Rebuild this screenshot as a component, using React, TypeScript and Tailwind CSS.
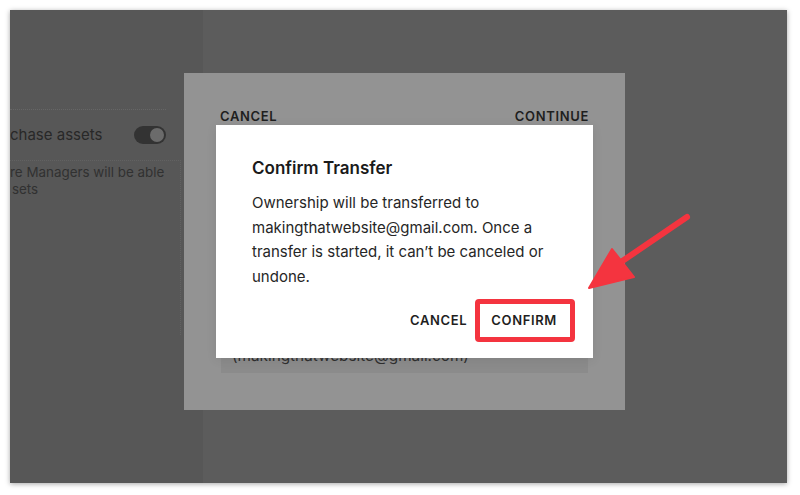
const App = () => {
  return (
    <div
      className="relative w-[800px] h-[495px] bg-white p-[10px] overflow-hidden"
      style={{ fontFamily: "Inter, 'Noto Sans', sans-serif" }}
    >
      {/* Window */}
      <div className="relative flex w-[777px] h-[473px] shadow-[0_1px_5px_rgba(0,0,0,0.35)]">
        {/* Left settings panel (dimmed) */}
        <div className="w-[193px] overflow-hidden bg-[#575757] pt-[99px]">
          <div className="w-[156px] border-t border-dotted border-[#666]">
            <div className="flex items-center justify-between h-[50px]">
              <span className="text-[15px] text-[#282828] whitespace-nowrap">chase assets</span>
              <div className="flex items-center justify-end w-[32px] h-[18px] rounded-full bg-[#333] pr-[2px]">
                <div className="w-[14px] h-[14px] rounded-full bg-[#6b6b6b]"></div>
              </div>
            </div>
          </div>
          <div className="w-[171px] h-[175px] border-t border-r border-dotted border-[#626262] pt-[3px]">
            <p className="text-[13.4px] leading-[17px] text-[#313131] whitespace-nowrap">re Managers will be able</p>
            <p className="text-[13.4px] leading-[17px] text-[#313131] pl-[2px]">sets</p>
          </div>
        </div>
        <div className="flex-1 bg-[#5c5c5c]"></div>

        {/* Transfer panel (dimmed) */}
        <div className="absolute left-[174px] top-[63px] w-[441px] h-[337px] bg-[#939393] flex flex-col">
          <div className="flex justify-between px-[36px] pt-[34px] text-[13px] font-semibold tracking-[0.05em] text-[#1f1f1f]">
            <span>CANCEL</span>
            <span>CONTINUE</span>
          </div>
          <div className="flex-1"></div>
          <div className="mx-[37px] mb-[37px] h-[38px] bg-[#8b8b8b] flex items-end px-[11px] pb-[8px]">
            <span className="text-[15.3px] leading-[18px] text-[#2f2f2f]">(makingthatwebsite@gmail.com)</span>
          </div>

          {/* Confirm dialog */}
          <div className="absolute left-[32px] top-[52px] w-[377px] h-[233px] bg-white pt-[32px] shadow-[0_2px_10px_rgba(0,0,0,0.08)]">
            <h2 className="px-[36px] text-[17px] leading-[22px] font-semibold text-[#1a1a1a]">Confirm Transfer</h2>
            <p className="px-[36px] mt-[12px] text-[15px] leading-[24.5px] text-[#262626]">
              Ownership will be transferred to makingthatwebsite@gmail.com. Once a transfer is started, it can’t be canceled or undone.
            </p>
            <div className="flex justify-end items-center gap-[8px] pr-[18px] mt-[10px]">
              <span className="text-[13px] font-semibold tracking-[0.05em] text-[#1f1f1f]">CANCEL</span>
              <span className="flex items-center h-[43px] pl-[11px] pr-[13px] border-[5px] border-[#f4343f] rounded-[4px] text-[13px] font-semibold tracking-[0.05em] text-[#1f1f1f]">
                CONFIRM
              </span>
            </div>
          </div>
        </div>
      </div>

      {/* Annotation arrow */}
      <svg className="absolute left-0 top-0 pointer-events-none" width="800" height="495" viewBox="0 0 800 495">
        <line x1="687" y1="217" x2="618" y2="264" stroke="#f4343f" strokeWidth="6" strokeLinecap="round" />
        <polygon points="589,288 612,249 634,277" fill="#f4343f" stroke="#f4343f" strokeWidth="2" strokeLinejoin="round" />
      </svg>
    </div>
  );
};

export default App;
